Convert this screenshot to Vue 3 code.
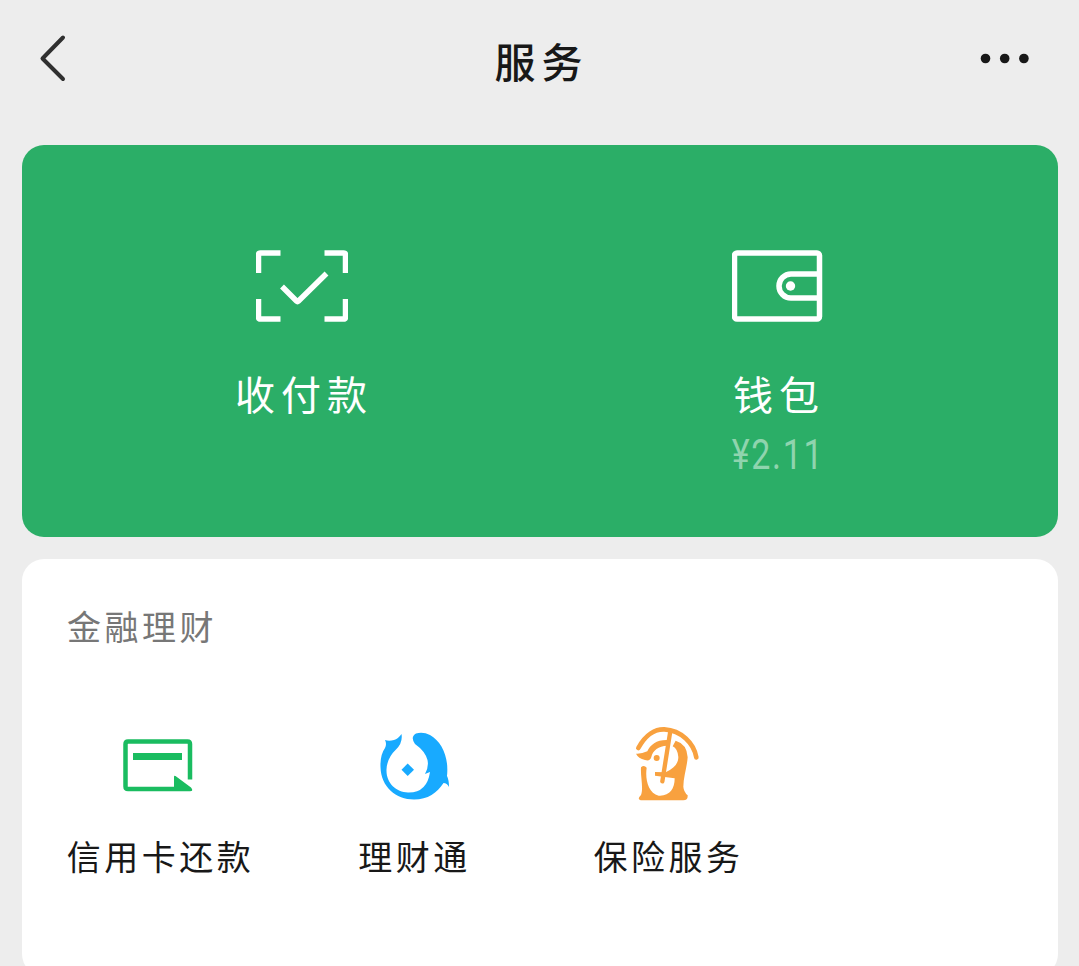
<script setup>
const services = [
  { name: '信用卡还款', icon: 'card' },
  { name: '理财通', icon: 'wealth' },
  { name: '保险服务', icon: 'insurance' }
]
</script>

<template>
  <main class="page">
    <header class="nav">
      <svg class="back" width="30" height="50" viewBox="0 0 30 50">
        <path d="M24 4.5 3.5 25.5 24 46" />
      </svg>
      <h1 class="title">服务</h1>
      <svg class="more" width="50" height="12" viewBox="0 0 50 12">
        <circle cx="5.5" cy="5.5" r="4.8" /><circle cx="24.7" cy="5.5" r="4.8" /><circle cx="43.9" cy="5.5" r="4.8" />
      </svg>
    </header>

    <section class="pay">
      <div class="pay-item">
        <svg class="line-icon" width="92" height="74" viewBox="1.5 0 92 74">
          <path d="M4 24V6Q4 4 6 4H24M70 4H89Q91 4 91 6V24M91 50V68Q91 70 89 70H70M26 70H6Q4 70 4 68V50M24 4H26" />
          <path d="M27.500 37.500 42 52Q43 53 44 52L72 24.500" />
        </svg>
        <span class="pay-name">收付款</span>
      </div>
      <div class="pay-item">
        <svg class="line-icon" width="92" height="74" viewBox="1.5 0 92 74">
          <rect x="4" y="4" width="85" height="66" rx="2.5" />
          <path d="M88 25H60.500A12 12 0 0 0 60.500 49H88" />
          <circle class="dot" cx="60" cy="37" r="4.7" />
        </svg>
        <span class="pay-name">钱包</span>
        <span class="balance">¥2.11</span>
      </div>
    </section>

    <section class="finance">
      <h2 class="heading">金融理财</h2>
      <div class="grid">
        <div v-for="s in services" :key="s.name" class="service">
          <svg v-if="s.icon === 'card'" class="icon" width="100" height="100" viewBox="1 -1 100 100">
            <path d="M66 73H20Q17.500 73 17.500 70.500V28Q17.500 25.500 20 25.500H79.500Q82 25.500 82 28V63.500" fill="none" stroke="#1abc60" stroke-width="4.5" />
            <path d="M25 37H74V44H25ZM66 61Q66 59 67.500 60L83 71.500Q86 75.300 82 75.300H66Z" fill="#1abc60" />
          </svg>
          <svg v-else-if="s.icon === 'wealth'" class="icon" width="100" height="100" viewBox="-2 0 100 100">
            <path d="M36.500 19Q33 24 29 25Q24 26.500 20 25Q22 29 20 33Q15 40 15.500 52C16 72 31 84.500 49 84.500C63 84.500 72 78 78.500 68Q82 68 84 72Q84 65 82 61C84 42 77 27 65 20Q58 16.500 51 18.500Q45 22 50 29Q60 36 62.500 45Q64 52 60 59L65 57Q62 78 43 77.500C31 77 21 68 21.500 54.500Q22 43 31 34.500Q38 28 36.500 19Z" fill="#18aaff" />
            <path d="M42.700 48.500 49 54.800 42.700 61 36.500 54.800Z" fill="#18aaff" />
          </svg>
          <svg v-else class="icon" width="100" height="100" viewBox="-9 0 300 300">
            <path d="M55 99C77 58 107 42 133 43C184 46 222 85 229 127" fill="none" stroke="#f8a13f" stroke-width="14" stroke-linecap="round" />
            <path d="M48 116Q65 117 82 109C91 88 112 73 145 75L141 92C116 93 98 106 94 126Q90 140 75 135Q55 130 48 116Z" fill="#f8a13f" />
            <path d="M167 77Q201 87 203 127C201 157 190 187 190 215Q191 230 203 241Q204 256 190 256H62Q50 252 63 240C71 221 61 183 63 157Q72 149 80 158C75 192 84 235 116 242C149 244 164 222 164 190L105 182V171L137 172C163 160 175 145 175 126Q173 101 158 94Z" fill="#f8a13f" />
            <circle cx="110" cy="129" r="9" fill="#f8a13f" />
            <path d="M151 48 127 199" fill="none" stroke="#f8a13f" stroke-width="13" stroke-linecap="round" />
          </svg>
          <span class="service-name">{{ s.name }}</span>
        </div>
      </div>
    </section>
  </main>
</template>

<style>
body { background: #ededed; overflow: hidden; }
</style>

<style scoped>
.page {
  box-sizing: border-box;
  width: 1079px;
  height: 966px;
  padding: 0 21px 0 22px;
  overflow: hidden;
  background: #ededed;
  color: #181818;
  font-family: "Noto Sans CJK SC", sans-serif;
}
svg { display: block; }
.nav {
  display: grid;
  grid-template-columns: 100px 1fr 100px;
  align-items: center;
  height: 117px;
  margin-bottom: 28px;
}
.back { margin: -2px 0 0 17px; fill: none; stroke: #303030; stroke-width: 4; stroke-linecap: round; stroke-linejoin: round; }
.title { margin: 2px 0 0; padding-left: 3px; font-size: 41px; line-height: 60px; font-weight: 500; letter-spacing: 6px; text-align: center; }
.more { justify-self: end; margin-right: 28px; fill: #181818; }
.pay {
  box-sizing: border-box;
  display: grid;
  grid-template-columns: 1fr 1fr;
  height: 392px;
  padding: 104px 43px 0;
  border-radius: 22px;
  background: #2bae67;
  color: #fff;
}
.pay-item { display: flex; flex-direction: column; align-items: center; }
.line-icon { margin-left: -1px; fill: none; stroke: #fff; stroke-width: 5.5; }
.pay-item:last-child .line-icon { margin-left: 0; }
.line-icon .dot { fill: #fff; stroke: none; }
.pay-name { margin-top: 40px; padding-left: 3px; font-size: 40px; line-height: 60px; letter-spacing: 6px; }
.balance { margin-top: 5px; font-family: Roboto, sans-serif; font-size: 42px; line-height: 54px; letter-spacing: 2px; color: #8fd4ae; transform: scaleX(.81); }
.finance {
  box-sizing: border-box;
  height: 417px;
  margin-top: 22px;
  padding: 42px 10px 0;
  border-radius: 22px;
  background: #fff;
}
.heading { margin: 0 0 0 35px; color: #777; font-size: 34px; line-height: 50px; font-weight: 400; letter-spacing: 3.5px; }
.grid { display: grid; grid-template-columns: repeat(4, 1fr); margin-top: 64px; }
.service { display: flex; flex-direction: column; align-items: center; }
.service-name { margin-top: 16px; padding-left: 3px; font-size: 34px; line-height: 50px; letter-spacing: 3.5px; white-space: nowrap; }
</style>
